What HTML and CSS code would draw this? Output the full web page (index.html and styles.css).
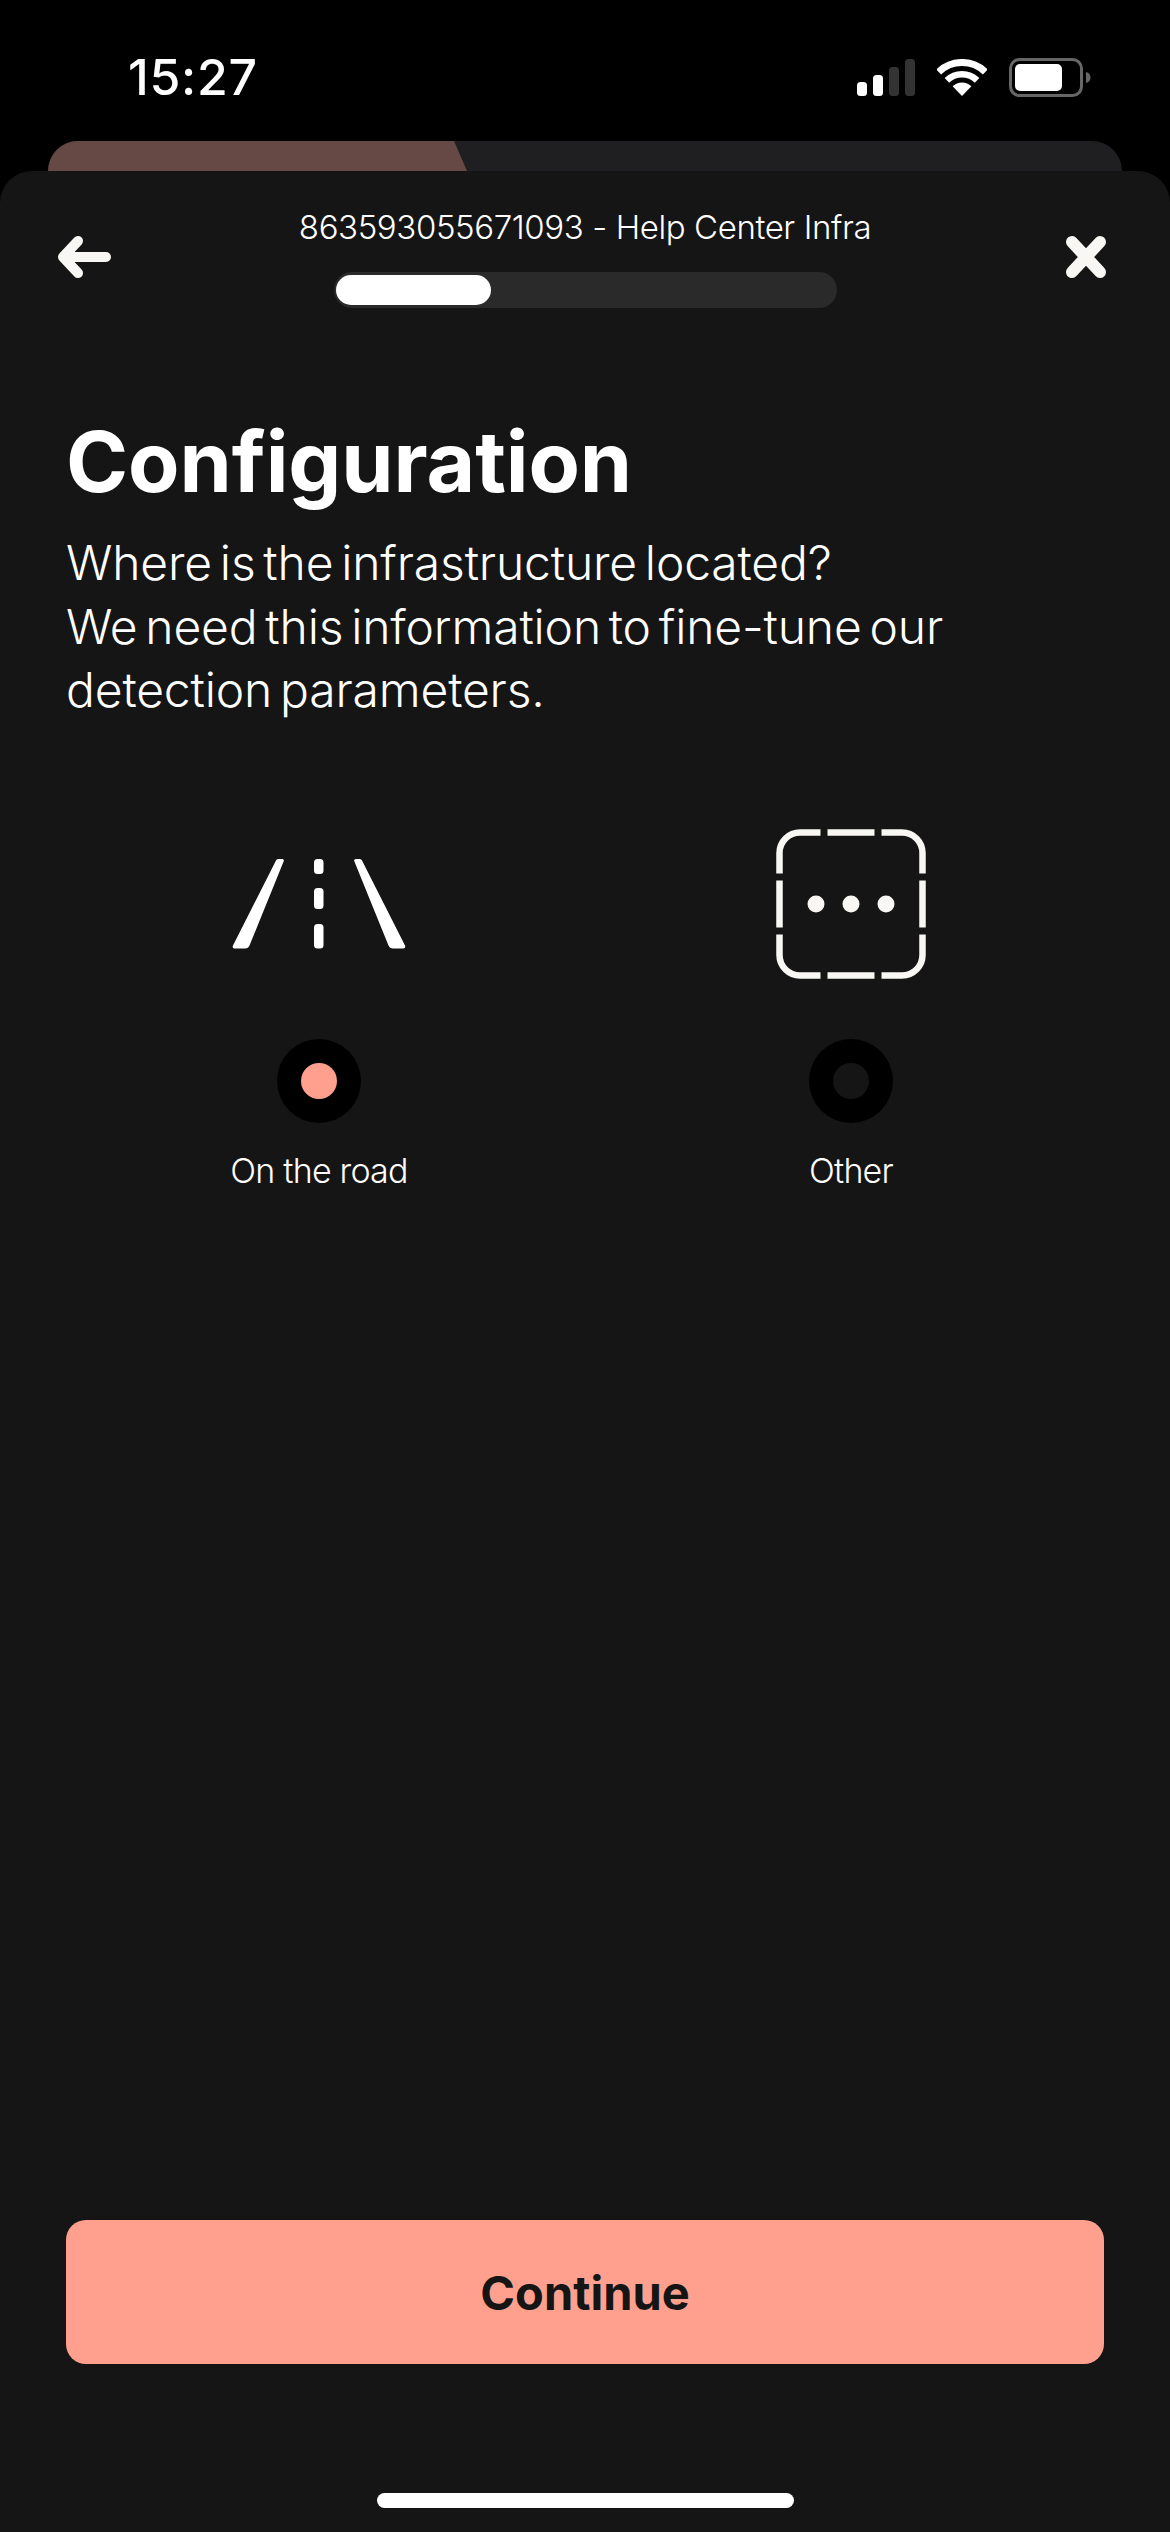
FILE: index.html
```html
<!DOCTYPE html>
<html lang="en">
<head>
  <meta charset="UTF-8" />
  <meta name="viewport" content="width=device-width, initial-scale=1.0" />
  <title>Configuration</title>
  <link rel="stylesheet" href="styles.css">
</head>
<body>
  <div class="phone">
    <div class="status-bar">
      <div class="clock">15:27</div>
      <div class="status-icons">
        <svg class="signal" width="58" height="37" viewBox="0 0 58 37">
          <rect x="0" y="23" width="10" height="14" rx="3.5" fill="#fff"/>
          <rect x="16" y="16" width="10" height="21" rx="3.5" fill="#fff"/>
          <rect x="32" y="8" width="10" height="29" rx="3.5" fill="#333"/>
          <rect x="48" y="0" width="10" height="37" rx="3.5" fill="#333"/>
        </svg>
        <svg class="wifi" width="50" height="37" viewBox="0 0 50 37">
          <path d="M1.7 12.9A33.5 33.5 0 0 1 48.3 12.9" fill="none" stroke="#fff" stroke-width="7"/>
          <path d="M9.9 21.4A21.75 21.75 0 0 1 40.1 21.4" fill="none" stroke="#fff" stroke-width="6.5"/>
          <path d="M25 37L15.6 27.3A13.5 13.5 0 0 1 34.4 27.3Z" fill="#fff"/>
        </svg>
        <svg class="battery" width="82" height="39" viewBox="0 0 82 39">
          <rect x="1.5" y="1.5" width="71" height="36" rx="9" fill="none" stroke="#666" stroke-width="3"/>
          <rect x="6" y="6" width="47" height="27" rx="5" fill="#fff"/>
          <path d="M77 14C80 14.500 81.500 17 81.500 19.500C81.500 22 80 24.500 77 25Z" fill="#666"/>
        </svg>
      </div>
    </div>

    <div class="back-card">
      <div class="back-card-fill"></div>
    </div>

    <div class="sheet">
      <div class="sheet-header">
        <svg class="back-icon" width="60" height="44" viewBox="0 0 60 44">
          <path d="M8 22H51M23 6L8 22L23 38" fill="none" stroke="#f8f7f3" stroke-width="10" stroke-linecap="round" stroke-linejoin="round"/>
        </svg>
        <div class="header-middle">
          <div class="header-title">863593055671093 - Help Center Infra</div>
          <div class="progress-track">
            <div class="progress-fill"></div>
          </div>
        </div>
        <svg class="close-icon" width="48" height="48" viewBox="0 0 48 48">
          <path d="M10 9L38 39M38 9L10 39" fill="none" stroke="#f8f7f3" stroke-width="12" stroke-linecap="round"/>
        </svg>
      </div>

      <div class="intro">
        <h1>Configuration</h1>
        <p>Where is the infrastructure located?<br>We need this information to fine-tune our<br>detection parameters.</p>
      </div>

      <div class="options">
        <div class="option">
          <div class="option-icon">
            <svg width="174" height="92" viewBox="0 0 174 92">
              <path d="M44 2.500C44.600 1.500 45.500 1 46.500 1H50C51.500 1 52.200 2 51.700 3.300L17.500 87.500C16.700 89.500 15.200 90.500 13 90.500H3C1 90.500 .2 89 1 87.500Z" fill="#fff"/>
              <rect x="82" y="1" width="9.500" height="15" rx="3.500" fill="#fff"/>
              <rect x="82" y="30" width="9.500" height="21" rx="3.500" fill="#fff"/>
              <rect x="82" y="66" width="9.500" height="24.500" rx="3.500" fill="#fff"/>
              <path d="M130 2.500C129.400 1.500 128.500 1 127.500 1H124C122.500 1 121.800 2 122.300 3.300L156.500 87.500C157.300 89.500 158.800 90.500 161 90.500H171C173 90.500 173.800 89 173 87.500Z" fill="#fff"/>
            </svg>
          </div>
          <div class="radio radio-on"><span></span></div>
          <div class="option-label">On the road</div>
        </div>
        <div class="option">
          <div class="option-icon">
            <svg width="150" height="150" viewBox="0 0 150 150">
              <path d="M44.500 3.500H24A20.500 20.500 0 0 0 3.500 24V44.500M51.500 3.500H98.500M105.500 3.500H126A20.500 20.500 0 0 1 146.500 24V44.500M146.500 51.500V98.500M146.500 105.500V126A20.500 20.500 0 0 1 126 146.500H105.500M98.500 146.500H51.500M44.500 146.500H24A20.500 20.500 0 0 1 3.500 126V105.500M3.500 98.500V51.500" fill="none" stroke="#f8f7f3" stroke-width="6.500"/>
              <circle cx="40" cy="75" r="8.500" fill="#f8f7f3"/>
              <circle cx="75" cy="75" r="8.500" fill="#f8f7f3"/>
              <circle cx="110" cy="75" r="8.500" fill="#f8f7f3"/>
            </svg>
          </div>
          <div class="radio"><span></span></div>
          <div class="option-label">Other</div>
        </div>
      </div>

      <button class="continue-button">Continue</button>
      <div class="home-bar"></div>
    </div>
  </div>
</body>
</html>
```

FILE: styles.css
```css
* {
  box-sizing: border-box;
}

body {
  margin: 0;
  background: #000;
  color: #fff;
  font-family: Inter, 'Liberation Sans', sans-serif;
  overflow: hidden;
}

.phone {
  width: 1170px;
  height: 2532px;
  display: flex;
  flex-direction: column;
}

.status-bar {
  height: 141px;
  padding: 58px 79px 0 128px;
  display: flex;
  justify-content: space-between;
  align-items: flex-start;
  flex-shrink: 0;
}

.clock {
  font-size: 50px;
  line-height: 39px;
  font-weight: 500;
  letter-spacing: 0.7px;
}

.status-icons {
  display: flex;
  align-items: center;
  gap: 22px;
}

.status-icons svg {
  display: block;
}

.back-card {
  height: 30px;
  margin: 0 48px;
  background: #1f1f21;
  border-radius: 32px 32px 0 0;
  overflow: hidden;
  flex-shrink: 0;
}

.back-card-fill {
  width: 420px;
  height: 30px;
  background: #664945;
  clip-path: polygon(0 0, 406px 0, 419px 100%, 0 100%);
}

.sheet {
  flex: 1;
  background: #151515;
  border-radius: 32px 32px 0 0;
  display: flex;
  flex-direction: column;
}

.sheet-header {
  display: grid;
  grid-template-columns: 1fr auto 1fr;
  align-items: center;
  padding: 35px 55px 0;
}

.close-icon {
  justify-self: end;
  margin-right: 5px;
}

.header-middle {
  display: flex;
  flex-direction: column;
  align-items: center;
  gap: 24px;
}

.header-title {
  font-size: 33px;
  line-height: 42px;
  font-weight: 300;
  letter-spacing: -0.4px;
  white-space: nowrap;
}

.progress-track {
  width: 503px;
  height: 36px;
  padding: 3px 2px;
  background: #2a2a2a;
  border-radius: 18px;
}

.progress-fill {
  width: 155px;
  height: 30px;
  background: #fff;
  border-radius: 15px;
}

.intro {
  padding: 0 66px;
  margin-top: 106px;
}

.intro h1 {
  margin: 0;
  font-size: 84px;
  line-height: 96px;
  font-weight: 700;
  letter-spacing: -0.1px;
}

.intro p {
  margin: 21px 0 0;
  font-size: 48px;
  line-height: 63.500px;
  font-weight: 300;
  letter-spacing: -0.15px;
  word-spacing: -5.500px;
}

.options {
  display: grid;
  grid-template-columns: 532px 532px;
  justify-content: center;
  margin-top: 107px;
}

.option {
  display: flex;
  flex-direction: column;
  align-items: center;
}

.option-icon {
  height: 150px;
  display: flex;
  align-items: center;
}

.option-icon svg {
  display: block;
}

.radio {
  width: 84px;
  height: 84px;
  margin-top: 60px;
  background: #000;
  border-radius: 50%;
  display: flex;
  align-items: center;
  justify-content: center;
}

.radio span {
  width: 36px;
  height: 36px;
  background: #151515;
  border-radius: 50%;
}

.radio-on span {
  background: #ffa08f;
}

.option-label {
  margin-top: 28px;
  font-size: 34px;
  line-height: 40px;
  font-weight: 300;
  letter-spacing: -0.8px;
}

.continue-button {
  margin: auto 66px 0;
  height: 144px;
  background: #ffa08f;
  border: none;
  border-radius: 20px;
  color: #151515;
  font-family: Inter, 'Liberation Sans', sans-serif;
  font-size: 47px;
  font-weight: 700;
}

.home-bar {
  width: 417px;
  height: 15px;
  margin: 129px auto 24px;
  background: #fff;
  border-radius: 8px;
}
```
